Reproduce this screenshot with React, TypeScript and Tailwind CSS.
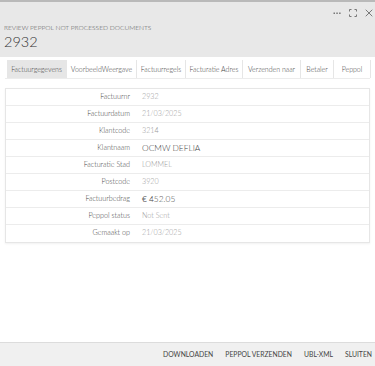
const tabs: { label: string; w: string }[] = [
  { label: "Factuurgegevens", w: "w-[60px]" },
  { label: "VoorbeeldWeergave", w: "w-[70px]" },
  { label: "Factuurregels", w: "w-[49px]" },
  { label: "Facturatie Adres", w: "w-[57px]" },
  { label: "Verzenden naar", w: "w-[58px]" },
  { label: "Betaler", w: "w-[33px]" },
  { label: "Peppol", w: "w-[37px]" },
];

const rows: { label: string; value: string; strong?: boolean; euro?: boolean }[] = [
  { label: "Factuurnr", value: "2932" },
  { label: "Factuurdatum", value: "21/03/2025" },
  { label: "Klantcode", value: "3214" },
  { label: "Klantnaam", value: "OCMW DEFLIA", strong: true },
  { label: "Facturatie Stad", value: "LOMMEL" },
  { label: "Postcode", value: "3920" },
  { label: "Factuurbedrag", value: "452.05", strong: true, euro: true },
  { label: "Peppol status", value: "Not Sent" },
  { label: "Gemaakt op", value: "21/03/2025" },
];

const actions = ["Downloaden", "Peppol verzenden", "UBL-XML", "Sluiten"];

export default function App() {
  return (
    <div className="flex h-[366px] w-[375px] flex-col overflow-hidden bg-white font-['Lato',sans-serif] font-light">
      {/* Header */}
      <div className="relative h-[57px] shrink-0 border-t-2 border-[#b9b9b9] bg-[#e8e8e8] px-1 pt-[21px]">
        <div className="absolute right-[2px] top-[7px] flex items-center gap-[8px] text-[#777]">
          <svg width="8" height="8" viewBox="0 0 8 8" fill="currentColor">
            <rect x="0.5" y="3.5" width="1.5" height="1.5" />
            <rect x="3.3" y="3.5" width="1.5" height="1.5" />
            <rect x="6.1" y="3.5" width="1.5" height="1.5" />
          </svg>
          <svg width="8" height="8" viewBox="0 0 8 8" fill="none" stroke="currentColor" strokeWidth="1">
            <path d="M0.5 2.5V0.5H2.5M5.5 0.5H7.5V2.5M7.5 5.5V7.5H5.5M2.5 7.5H0.5V5.5" />
          </svg>
          <svg width="8" height="8" viewBox="0 0 9 9" fill="none" stroke="currentColor" strokeWidth="1.1">
            <path d="M0.8 0.8L8.2 8.2M8.2 0.8L0.8 8.2" />
          </svg>
        </div>
        <div className="text-[6.6px] uppercase leading-[9px] text-[#555]">
          Review Peppol not processed documents
        </div>
        <div className="text-[14.5px] leading-[20px] text-[#333]">2932</div>
      </div>

      {/* Tabs */}
      <div className="flex-1 px-[5px] pt-[3px]">
        <div className="flex h-[19px] border-b border-[#ececec] pl-[2px]">
          {tabs.map((t, i) => (
            <div
              key={t.label}
              className={`flex shrink-0 items-center justify-center whitespace-nowrap border-r border-[#e6e6e6] text-[7px] text-[#444] ${t.w} ${
                i === 0 ? "bg-[#e6e6e6]" : ""
              }`}
            >
              {t.label}
            </div>
          ))}
        </div>

        {/* Details */}
        <div className="mt-[9px] border border-[#e6e6e6] shadow-[0_1px_2px_rgba(0,0,0,0.06)]">
          {rows.map((r, i) => (
            <div
              key={r.label}
              className={`flex h-[17px] items-center ${i < rows.length - 1 ? "border-b border-[#ececec]" : ""}`}
            >
              <div className="w-[124px] text-right text-[7.2px] text-[#444]">{r.label}</div>
              <div
                className={`pl-[12px] ${
                  r.strong ? "text-[8.4px] text-[#444]" : "text-[7.2px] text-[#999]"
                }`}
              >
                {r.euro && <span className="font-normal text-[#666]">€ </span>}
                {r.value}
              </div>
            </div>
          ))}
        </div>
      </div>

      {/* Footer */}
      <div className="flex h-[24px] shrink-0 items-center justify-end gap-[12px] border-t border-[#dcdcdc] bg-[#f0f0f0] pr-[3px]">
        {actions.map((a) => (
          <span key={a} className="text-[6.8px] font-normal uppercase text-[#444]">
            {a}
          </span>
        ))}
      </div>
    </div>
  );
}
